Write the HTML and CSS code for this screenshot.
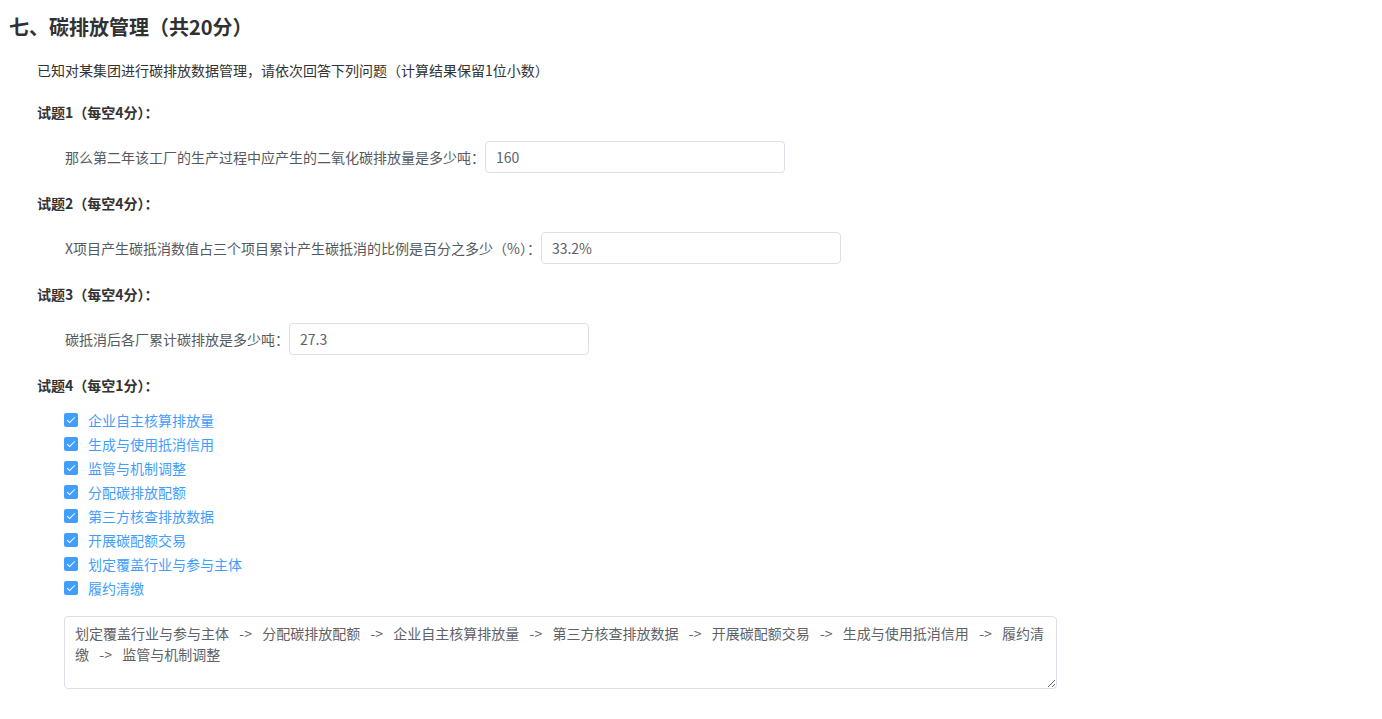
FILE: index.html
```html
<!DOCTYPE html>
<html lang="zh-CN">
<head>
    <meta charset="utf-8">
    <link rel="stylesheet" href="styles.css">
</head>
<body>
    <div class="paper">
        <h2 class="part-title">七、碳排放管理（共20分）</h2>
        <p class="part-desc">已知对某集团进行碳排放数据管理，请依次回答下列问题（计算结果保留1位小数）</p>

        <div class="question">
            <div class="q-title">试题1（每空4分）：</div>
            <div class="q-row">
                <span class="q-label">那么第二年该工厂的生产过程中应产生的二氧化碳排放量是多少吨：</span>
                <input class="q-input" type="text" value="160">
            </div>
        </div>

        <div class="question">
            <div class="q-title">试题2（每空4分）：</div>
            <div class="q-row">
                <span class="q-label">X项目产生碳抵消数值占三个项目累计产生碳抵消的比例是百分之多少（%）：</span>
                <input class="q-input" type="text" value="33.2%">
            </div>
        </div>

        <div class="question">
            <div class="q-title">试题3（每空4分）：</div>
            <div class="q-row">
                <span class="q-label">碳抵消后各厂累计碳排放是多少吨：</span>
                <input class="q-input" type="text" value="27.3">
            </div>
        </div>

        <div class="question">
            <div class="q-title q-title-list">试题4（每空1分）：</div>
            <ul class="check-list">
                <li class="check-item"><span class="check-box"></span>企业自主核算排放量</li>
                <li class="check-item"><span class="check-box"></span>生成与使用抵消信用</li>
                <li class="check-item"><span class="check-box"></span>监管与机制调整</li>
                <li class="check-item"><span class="check-box"></span>分配碳排放配额</li>
                <li class="check-item"><span class="check-box"></span>第三方核查排放数据</li>
                <li class="check-item"><span class="check-box"></span>开展碳配额交易</li>
                <li class="check-item"><span class="check-box"></span>划定覆盖行业与参与主体</li>
                <li class="check-item"><span class="check-box"></span>履约清缴</li>
            </ul>
            <textarea class="q-textarea">划定覆盖行业与参与主体  -&gt;  分配碳排放配额  -&gt;  企业自主核算排放量  -&gt;  第三方核查排放数据  -&gt;  开展碳配额交易  -&gt;  生成与使用抵消信用  -&gt;  履约清缴  -&gt;  监管与机制调整</textarea>
        </div>
    </div>
</body>
</html>
```

FILE: styles.css
```css
/* Base */
* {
    margin: 0;
    padding: 0;
    box-sizing: border-box;
}

body {
    background: #ffffff;
    color: #333333;
    font-family: "Noto Sans CJK SC", "Noto Sans", sans-serif;
    font-size: 14px;
}

.paper {
    padding: 13px 9px 20px;
}

/* Header */
.part-title {
    font-size: 20px;
    line-height: 28px;
    font-weight: bold;
    color: #303133;
}

.part-desc {
    margin: 19px 0 22px 28px;
    line-height: 20px;
    color: #333333;
}

/* Questions */
.question {
    padding-left: 28px;
}

.q-title {
    height: 20px;
    line-height: 20px;
    font-weight: bold;
    color: #333333;
    margin-bottom: 19px;
}

.q-title-list {
    margin-bottom: 13px;
}

.q-row {
    display: flex;
    align-items: center;
    height: 32px;
    padding-left: 28px;
    margin-bottom: 20px;
}

.q-label {
    color: #555a60;
}

.q-input {
    width: 300px;
    height: 32px;
    padding: 0 10px;
    border: 1px solid #dcdfe6;
    border-radius: 4px;
    font-family: inherit;
    font-size: 14px;
    color: #606266;
    outline: none;
}

/* Checkbox list */
.check-list {
    list-style: none;
    padding-left: 27px;
}

.check-item {
    display: flex;
    align-items: center;
    height: 24px;
    color: #409eff;
}

.check-box {
    position: relative;
    width: 14px;
    height: 14px;
    margin-right: 10px;
    background: #409eff;
    border-radius: 2px;
}

.check-box::after {
    content: "";
    position: absolute;
    left: 4.5px;
    top: 2px;
    width: 3px;
    height: 7px;
    border: 1px solid #ffffff;
    border-top: 0;
    border-left: 0;
    transform: rotate(45deg);
}

.q-textarea {
    display: block;
    width: 993px;
    height: 73px;
    margin: 16px 0 0 27px;
    padding: 6px 10px;
    border: 1px solid #dcdfe6;
    border-radius: 4px;
    font-family: inherit;
    font-size: 14px;
    line-height: 21px;
    word-spacing: 2px;
    color: #606266;
    resize: vertical;
    outline: none;
}
```
